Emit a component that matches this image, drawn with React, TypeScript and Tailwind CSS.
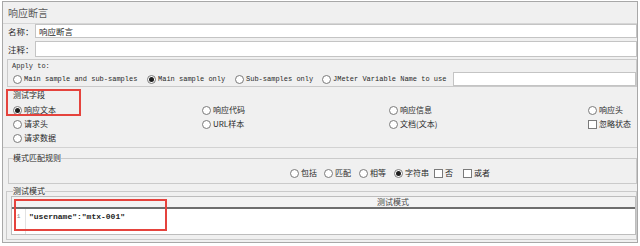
const cjk = "font-['Noto_Sans_CJK_SC','Microsoft_YaHei',sans-serif]"
const mono = "font-['Liberation_Mono',monospace]"

function Radio({ checked = false }: { checked?: boolean }) {
  return (
    <span className="flex h-[9px] w-[9px] shrink-0 items-center justify-center rounded-full border border-[#7a7a7a] bg-white">
      {checked && <span className="h-[5px] w-[5px] rounded-full bg-[#1e1e1e]" />}
    </span>
  )
}

function Check() {
  return <span className="h-[9px] w-[9px] shrink-0 border border-[#7a7a7a] bg-white" />
}

function Opt({ label, checked, box, className = '' }: { label: string; checked?: boolean; box?: boolean; className?: string }) {
  return (
    <span className={`flex items-center gap-[2px] ${className}`}>
      {box ? <Check /> : <Radio checked={checked} />}
      <span className="leading-none">{label}</span>
    </span>
  )
}

const fields: { label: string; checked?: boolean; box?: boolean }[][] = [
  [{ label: '响应文本', checked: true }, { label: '响应代码' }, { label: '响应信息' }, { label: '响应头' }],
  [{ label: '请求头' }, { label: 'URL样本' }, { label: '文档(文本)' }, { label: '忽略状态', box: true }],
  [{ label: '请求数据' }],
]

export default function App() {
  return (
    <div className="h-[246px] w-[640px] bg-white pt-[1px] pl-[2px]">
      <div className={`relative flex h-[242px] w-[636px] flex-col border border-[#a8a8a8] bg-[#f0f0f0] text-[#2a2a2a] ${cjk}`}>
        {/* title */}
        <div className="flex h-[22px] items-center border-b border-[#d6d6d6] pl-[5px] text-[10px] text-[#5a5a5a]">
          响应断言
        </div>

        {/* name */}
        <div className="flex h-[14px] items-center text-[8.5px]">
          <span className="w-[32px] pl-[5px]">名称：</span>
          <div className="flex h-full flex-1 items-center border border-[#c4c4c4] bg-white pl-[3px]">响应断言</div>
        </div>

        {/* comment */}
        <div className="mt-[3px] flex h-[16px] items-center text-[8.5px]">
          <span className="w-[32px] pl-[5px]">注释：</span>
          <div className="h-full flex-1 border border-[#c4c4c4] bg-white" />
        </div>

        {/* apply to */}
        <div className={`mt-[2px] ml-[4px] h-[28px] border border-[#cacaca] text-[7px] ${mono}`}>
          <div className="pl-[4px] pt-[2px] leading-[8px] text-[#333]">Apply to:</div>
          <div className="mt-[2px] flex h-[14px] items-center pl-[5px]">
            <Opt label="Main sample and sub-samples" className="w-[134px]" />
            <Opt label="Main sample only" checked className="w-[88px]" />
            <Opt label="Sub-samples only" className="w-[87px]" />
            <Opt label="JMeter Variable Name to use" className="w-[131px]" />
            <div className="h-[14px] flex-1 border border-[#c4c4c4] bg-white" />
          </div>
        </div>

        {/* test field */}
        <div className="h-[61px] border-b border-[#d2d2d2] pl-[10px] pt-[3px] text-[8px]">
          <div className="leading-[10px]">测试字段</div>
          <div className="mt-[3px] grid grid-cols-[189px_187px_199px_1fr]">
            {fields.map((row, i) =>
              row.map((f, j) => (
                <Opt key={`${i}-${j}`} label={f.label} checked={f.checked} box={f.box} className="h-[14px]" />
              ))
            )}
          </div>
        </div>

        {/* match rules */}
        <fieldset className="mt-[5px] ml-[5px] border border-[#cacaca] pb-[3px] text-[8px]">
          <legend className="ml-[4px] leading-[10px]">模式匹配规则</legend>
          <div className="mt-[3px] flex h-[14px] items-center pl-[281px]">
            <Opt label="包括" className="mr-[7px]" />
            <Opt label="匹配" className="mr-[8px]" />
            <Opt label="相等" className="mr-[8px]" />
            <Opt label="字符串" checked className="mr-[5px]" />
            <Opt label="否" box className="mr-[10px]" />
            <Opt label="或者" box />
          </div>
        </fieldset>

        {/* test pattern */}
        <fieldset className="mt-[2px] ml-[3px] border border-[#cacaca] pb-[4px] text-[8px]">
          <legend className="ml-[6px] leading-[10px]">测试模式</legend>
          <div className="ml-[4px] border border-[#bdbdbd] bg-white">
            <div className="flex h-[12px] items-center border-b-2 border-[#6e6e6e] bg-[#f3f3f3] pl-[365px] text-[#444]">
              测试模式
            </div>
            <div className="flex h-[25px]">
              <div className={`w-[14px] border-r border-[#e2e2e2] pt-[3px] text-center text-[6px] text-[#888] ${mono}`}>1</div>
              <div className={`pl-[3px] pt-[2px] text-[8px] font-bold text-[#222] ${mono}`}>"username":"mtx-001"</div>
            </div>
          </div>
        </fieldset>

        {/* annotations */}
        <div className="absolute left-[3px] top-[87px] h-[27px] w-[75px] border-2 border-[#e5433d]" />
        <div className="absolute left-[11px] top-[197px] h-[32px] w-[153px] border-2 border-[#e5433d]" />
      </div>
    </div>
  )
}
